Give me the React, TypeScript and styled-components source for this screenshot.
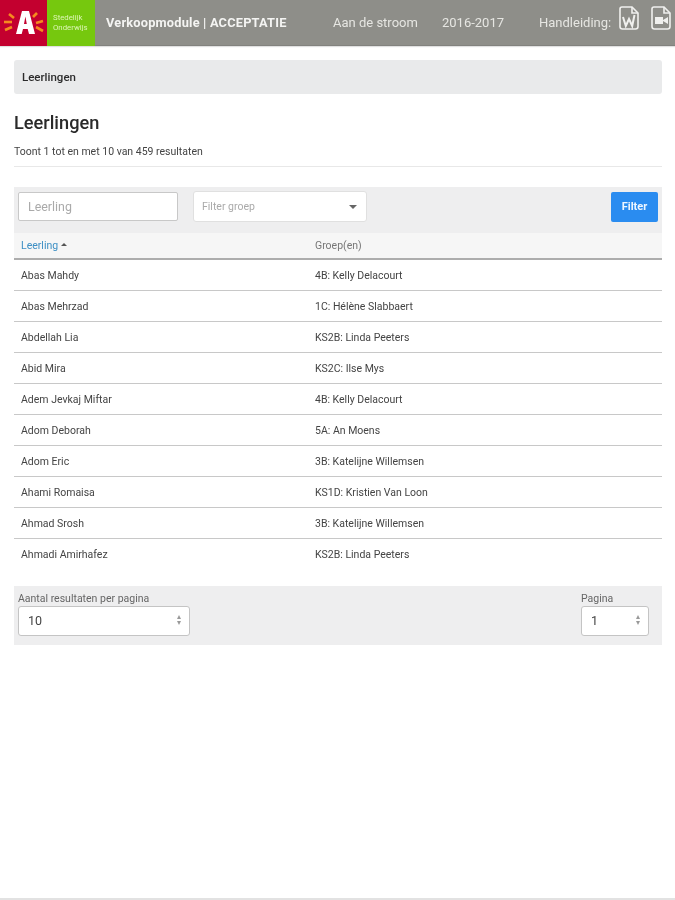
import React from "react";
import styled, { createGlobalStyle } from "styled-components";

const Global = createGlobalStyle`
  html, body { margin: 0; padding: 0; background: #fff; }
  body { font-family: Roboto, "Liberation Sans", sans-serif; color: #333; }
  * { box-sizing: border-box; }
`;

const Page = styled.div`
  display: flex;
  flex-direction: column;
  width: 675px;
  height: 900px;
  overflow: hidden;
  filter: blur(0.5px);
`;

const Header = styled.header`
  display: flex;
  align-items: center;
  height: 46px;
  background: #8e8e89;
  border-bottom: 1px solid #82827e;
  box-shadow: 0 1px 1px rgba(0, 0, 0, 0.12);
  color: #f0f0ee;
`;

const LogoRed = styled.div`
  width: 47px;
  height: 46px;
  background: #c3002f;
  display: flex;
`;

const LogoGreen = styled.div`
  width: 48px;
  height: 46px;
  background: #76c80e;
  padding: 13px 0 0 6px;
  color: #dcf5b4;
  font-size: 7.8px;
  line-height: 10px;
`;

const Title = styled.div`
  margin-left: 11px;
  width: 227px;
  font-size: 12.8px;
  font-weight: 700;
  letter-spacing: 0.2px;
  color: #f4f4f2;
  white-space: nowrap;
`;

const NavItem = styled.div<{ $width: number }>`
  width: ${(p) => p.$width}px;
  font-size: 13px;
  color: #e6e6e2;
  white-space: nowrap;
`;

const IconGroup = styled.div`
  display: flex;
  align-items: center;
  gap: 12px;
  margin: -10px 0 0 7px;
`;

const Main = styled.main`
  padding: 14px 13px 0 14px;
`;

const Breadcrumb = styled.div`
  height: 34px;
  background: #e9eaeb;
  border-radius: 3px;
  padding: 0 8px;
  display: flex;
  align-items: center;
  font-size: 11.5px;
  font-weight: 500;
  color: #2b2b2b;
`;

const Heading = styled.h1`
  margin: 17px 0 0;
  height: 24px;
  font-size: 18.2px;
  line-height: 24px;
  font-weight: 500;
  color: #2a2a2a;
`;

const Summary = styled.p`
  margin: 10px 0 0;
  height: 14px;
  font-size: 10.5px;
  line-height: 14px;
  color: #444;
`;

const Divider = styled.hr`
  margin: 7px 0 20px;
  height: 1px;
  border: 0;
  background: #e8e8e8;
`;

const FilterBar = styled.div`
  display: flex;
  align-items: flex-start;
  height: 46px;
  padding: 5px 4px 0;
  background: #eeeeef;
`;

const TextInput = styled.div`
  width: 160px;
  height: 29px;
  background: #fff;
  border: 1px solid #c8c8c8;
  border-radius: 2px;
  padding: 0 9px;
  display: flex;
  align-items: center;
  font-size: 12.4px;
  color: #aaa;
`;

const GroupSelect = styled.div`
  width: 174px;
  height: 31px;
  margin: -1px 0 0 15px;
  background: #fff;
  border: 1px solid #e0e0e0;
  border-radius: 3px;
  padding: 0 9px 0 8px;
  display: flex;
  align-items: center;
  justify-content: space-between;
  font-size: 10.5px;
  color: #aaa;
`;

const Caret = styled.span`
  width: 0;
  height: 0;
  border-left: 4px solid transparent;
  border-right: 4px solid transparent;
  border-top: 4px solid #666;
`;

const FilterButton = styled.button`
  width: 47px;
  height: 30px;
  margin-left: auto;
  padding: 0 0 2px;
  border: 0;
  border-radius: 2px;
  background: #2a8cf0;
  color: #eef6ff;
  font: 700 11px Roboto, "Liberation Sans", sans-serif;
`;

const Table = styled.div`
  display: flex;
  flex-direction: column;
`;

const HeadRow = styled.div`
  display: grid;
  grid-template-columns: 294px 1fr;
  align-items: center;
  height: 27px;
  padding-left: 7px;
  background: #f6f6f6;
  border-bottom: 2px solid #adadad;
  font-size: 10.5px;
  color: #777;
`;

const SortLink = styled.span`
  color: #3d8fc4;
  display: inline-flex;
  align-items: center;
  gap: 3px;
`;

const SortCaret = styled.span`
  width: 0;
  height: 0;
  margin-top: -3px;
  border-left: 3px solid transparent;
  border-right: 3px solid transparent;
  border-bottom: 3px solid #555;
`;

const Row = styled.div`
  display: grid;
  grid-template-columns: 294px 1fr;
  align-items: center;
  height: 31px;
  padding-left: 7px;
  border-bottom: 1px solid #c8c8c8;
  font-size: 10.5px;
  color: #444;
  &:last-child {
    border-bottom: 0;
  }
`;

const Pager = styled.div`
  display: flex;
  justify-content: space-between;
  height: 59px;
  margin-top: 16px;
  padding: 6px 13px 0 4px;
  background: #eeeeef;
`;

const PagerField = styled.div`
  display: flex;
  flex-direction: column;
`;

const PagerLabel = styled.label`
  height: 14px;
  font-size: 10.5px;
  line-height: 14px;
  color: #666;
`;

const StepSelect = styled.div<{ $width: number }>`
  width: ${(p) => p.$width}px;
  height: 30px;
  background: #fff;
  border: 1px solid #c4c4c4;
  border-radius: 3px;
  padding: 0 8px 2px 9px;
  display: flex;
  align-items: center;
  justify-content: space-between;
  font-size: 12.5px;
  color: #444;
`;

const Stepper = styled.span`
  display: flex;
  flex-direction: column;
  gap: 2px;
`;

const StepUp = styled.span`
  width: 0;
  height: 0;
  border-left: 2.5px solid transparent;
  border-right: 2.5px solid transparent;
  border-bottom: 4px solid #999;
`;

const StepDown = styled(StepUp)`
  border-bottom: 0;
  border-top: 4px solid #999;
`;

const PageEnd = styled.div`
  height: 2px;
  margin-top: auto;
  background: #e2e2e2;
`;

const AntwerpLogo = () => (
  <svg width="47" height="46" viewBox="0 0 47 46">
    <path
      d="M16 34 L22 11 H29 L35 34 H29 L27.7 29 H23 L21.7 34 Z M24 24 H26.8 L25.4 16.5 Z"
      fill="#fff"
      fillRule="evenodd"
    />
    <g stroke="#f58a1f" strokeWidth="2.6" fill="none">
      <path d="M9 14 L14 18" />
      <path d="M4 22 H12" />
      <path d="M5 30 L12 27" />
      <path d="M33 17 L37 13" />
      <path d="M36 23 L43 21" />
      <path d="M36 27 L43 31" />
    </g>
  </svg>
);

const WordIcon = () => (
  <svg width="20" height="24" viewBox="0 0 20 24" fill="none" stroke="#f0f0ee" strokeWidth="1.6">
    <path d="M3 1 H13 L19 7 V20.5 A2.5 2.5 0 0 1 16.5 23 H3.5 A2.5 2.5 0 0 1 1 20.5 V3 A2 2 0 0 1 3 1 Z" />
    <path d="M13 1 V7 H19" />
    <path d="M4 11 L6.8 20 L10 13 L13.2 20 L15.5 9" strokeWidth="2" />
  </svg>
);

const VideoIcon = () => (
  <svg width="20" height="24" viewBox="0 0 20 24" fill="none" stroke="#f0f0ee" strokeWidth="1.6">
    <path d="M3 1 H13 L19 7 V20.5 A2.5 2.5 0 0 1 16.5 23 H3.5 A2.5 2.5 0 0 1 1 20.5 V3 A2 2 0 0 1 3 1 Z" />
    <path d="M13 1 V7 H19" />
    <path d="M4 11 H12 V18 H4 Z M12 14 L17 11 V18 L12 15 Z" fill="#f0f0ee" stroke="none" />
  </svg>
);

const rows = [
  ["Abas Mahdy", "4B: Kelly Delacourt"],
  ["Abas Mehrzad", "1C: Hélène Slabbaert"],
  ["Abdellah Lia", "KS2B: Linda Peeters"],
  ["Abid Mira", "KS2C: Ilse Mys"],
  ["Adem Jevkaj Miftar", "4B: Kelly Delacourt"],
  ["Adom Deborah", "5A: An Moens"],
  ["Adom Eric", "3B: Katelijne Willemsen"],
  ["Ahami Romaisa", "KS1D: Kristien Van Loon"],
  ["Ahmad Srosh", "3B: Katelijne Willemsen"],
  ["Ahmadi Amirhafez", "KS2B: Linda Peeters"],
];

export default function App() {
  return (
    <Page>
      <Global />
      <Header>
        <LogoRed>
          <AntwerpLogo />
        </LogoRed>
        <LogoGreen>
          Stedelijk
          <br />
          Onderwijs
        </LogoGreen>
        <Title>Verkoopmodule | ACCEPTATIE</Title>
        <NavItem $width={109}>Aan de stroom</NavItem>
        <NavItem $width={97}>2016-2017</NavItem>
        <NavItem $width={73}>Handleiding:</NavItem>
        <IconGroup>
          <WordIcon />
          <VideoIcon />
        </IconGroup>
      </Header>
      <Main>
        <Breadcrumb>Leerlingen</Breadcrumb>
        <Heading>Leerlingen</Heading>
        <Summary>Toont 1 tot en met 10 van 459 resultaten</Summary>
        <Divider />
        <FilterBar>
          <TextInput>Leerling</TextInput>
          <GroupSelect>
            Filter groep
            <Caret />
          </GroupSelect>
          <FilterButton>Filter</FilterButton>
        </FilterBar>
        <Table>
          <HeadRow>
            <SortLink>
              Leerling
              <SortCaret />
            </SortLink>
            <span>Groep(en)</span>
          </HeadRow>
          {rows.map(([name, group]) => (
            <Row key={name}>
              <span>{name}</span>
              <span>{group}</span>
            </Row>
          ))}
        </Table>
        <Pager>
          <PagerField>
            <PagerLabel>Aantal resultaten per pagina</PagerLabel>
            <StepSelect $width={172}>
              10
              <Stepper>
                <StepUp />
                <StepDown />
              </Stepper>
            </StepSelect>
          </PagerField>
          <PagerField>
            <PagerLabel>Pagina</PagerLabel>
            <StepSelect $width={68}>
              1
              <Stepper>
                <StepUp />
                <StepDown />
              </Stepper>
            </StepSelect>
          </PagerField>
        </Pager>
      </Main>
      <PageEnd />
    </Page>
  );
}
